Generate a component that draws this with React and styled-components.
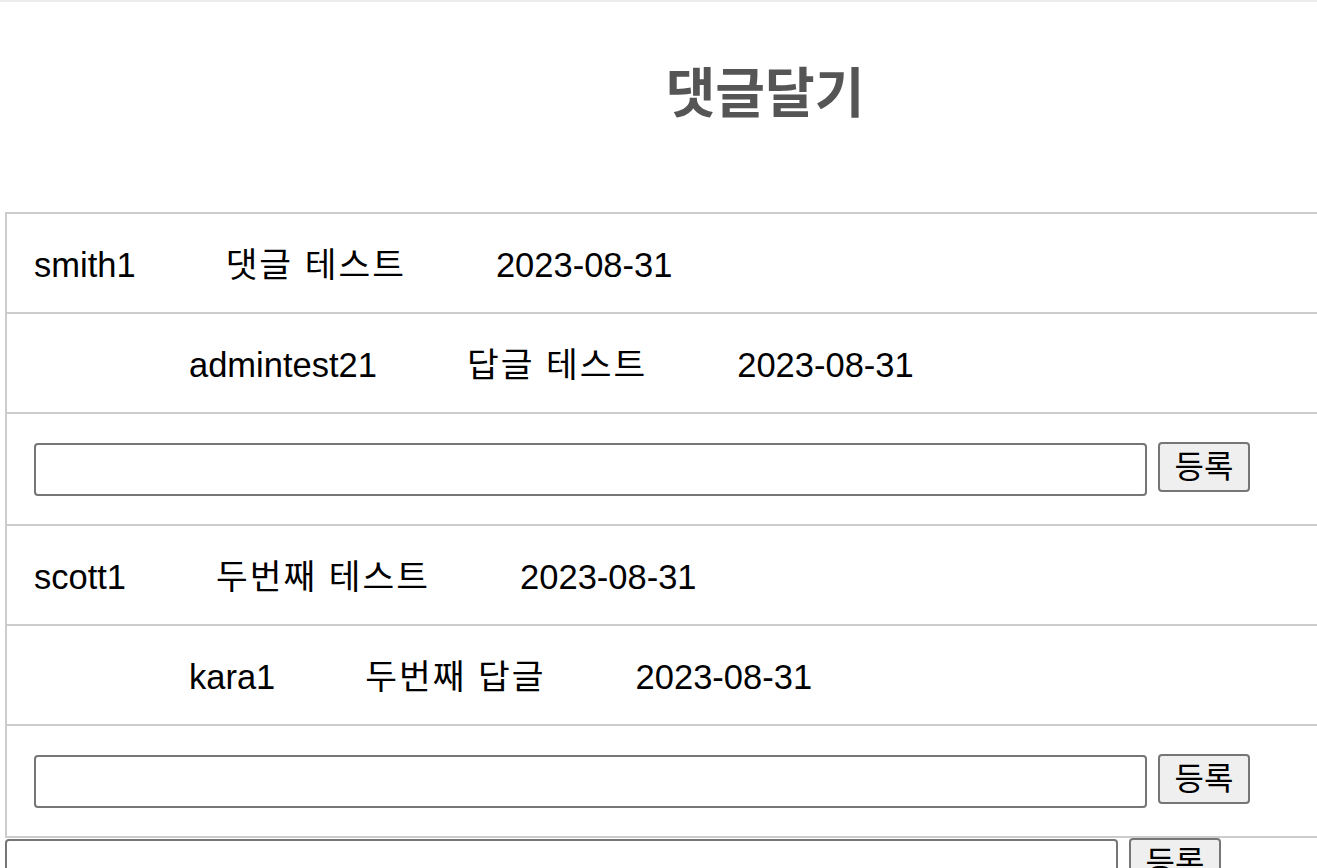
import styled, { createGlobalStyle } from "styled-components";

const GlobalStyle = createGlobalStyle`
  body {
    margin: 0;
    background: #fff;
    overflow: hidden;
    font-family: "Liberation Sans", Arial, "Noto Sans CJK KR", sans-serif;
    color: #000;
  }
`;

const Page = styled.div`
  width: 1520px;
  padding-left: 5px;
`;

const TopEdge = styled.div`
  height: 2px;
  margin-left: -5px;
  background: #ececec;
`;

const Title = styled.h2`
  margin: 0;
  padding: 66px 0 92px;
  text-align: center;
  font-size: 54px;
  line-height: 52px;
  font-weight: bold;
  color: #555;
`;

const CommentList = styled.div`
  border-top: 2px solid #ccc;
  border-left: 2px solid #ccc;
`;

const Row = styled.div`
  display: flex;
  align-items: center;
  gap: 90px;
  padding: 30px 0 26px ${(p) => (p.$reply ? "182px" : "27px")};
  border-bottom: 2px solid #ccc;
  font-size: 34.5px;
  line-height: 42px;
`;

const Body = styled.span`
  letter-spacing: 2px;
`;

const FormRow = styled.div`
  display: flex;
  align-items: flex-start;
  gap: 11px;
  padding: ${(p) => (p.$bare ? "0" : "28px 0 28px 27px")};
  border-bottom: ${(p) => (p.$bare ? "none" : "2px solid #ccc")};
`;

const TextInput = styled.input`
  box-sizing: border-box;
  width: 1113px;
  height: 53px;
  margin-top: 1px;
  border: 2px solid #767676;
  border-radius: 4px;
  background: #fff;
  font-size: 32px;
`;

const SubmitButton = styled.button`
  box-sizing: border-box;
  width: 92px;
  height: 50px;
  padding: 0;
  border: 2px solid #767676;
  border-radius: 4px;
  background: #efefef;
  font-family: "Liberation Sans", Arial, "Noto Sans CJK KR", sans-serif;
  font-size: 32px;
  line-height: 1;
  color: #000;
`;

const comments = [
  {
    user: "smith1",
    text: "댓글 테스트",
    date: "2023-08-31",
    reply: { user: "admintest21", text: "답글 테스트", date: "2023-08-31" },
  },
  {
    user: "scott1",
    text: "두번째 테스트",
    date: "2023-08-31",
    reply: { user: "kara1", text: "두번째 답글", date: "2023-08-31" },
  },
];

function ReplyForm({ bare }) {
  return (
    <FormRow $bare={bare}>
      <TextInput type="text" />
      <SubmitButton>등록</SubmitButton>
    </FormRow>
  );
}

export default function App() {
  return (
    <Page>
      <GlobalStyle />
      <TopEdge />
      <Title>댓글달기</Title>
      <CommentList>
        {comments.map((c) => (
          <div key={c.user}>
            <Row>
              <span>{c.user}</span>
              <Body>{c.text}</Body>
              <span>{c.date}</span>
            </Row>
            <Row $reply>
              <span>{c.reply.user}</span>
              <Body>{c.reply.text}</Body>
              <span>{c.reply.date}</span>
            </Row>
            <ReplyForm />
          </div>
        ))}
      </CommentList>
      <ReplyForm bare />
    </Page>
  );
}
